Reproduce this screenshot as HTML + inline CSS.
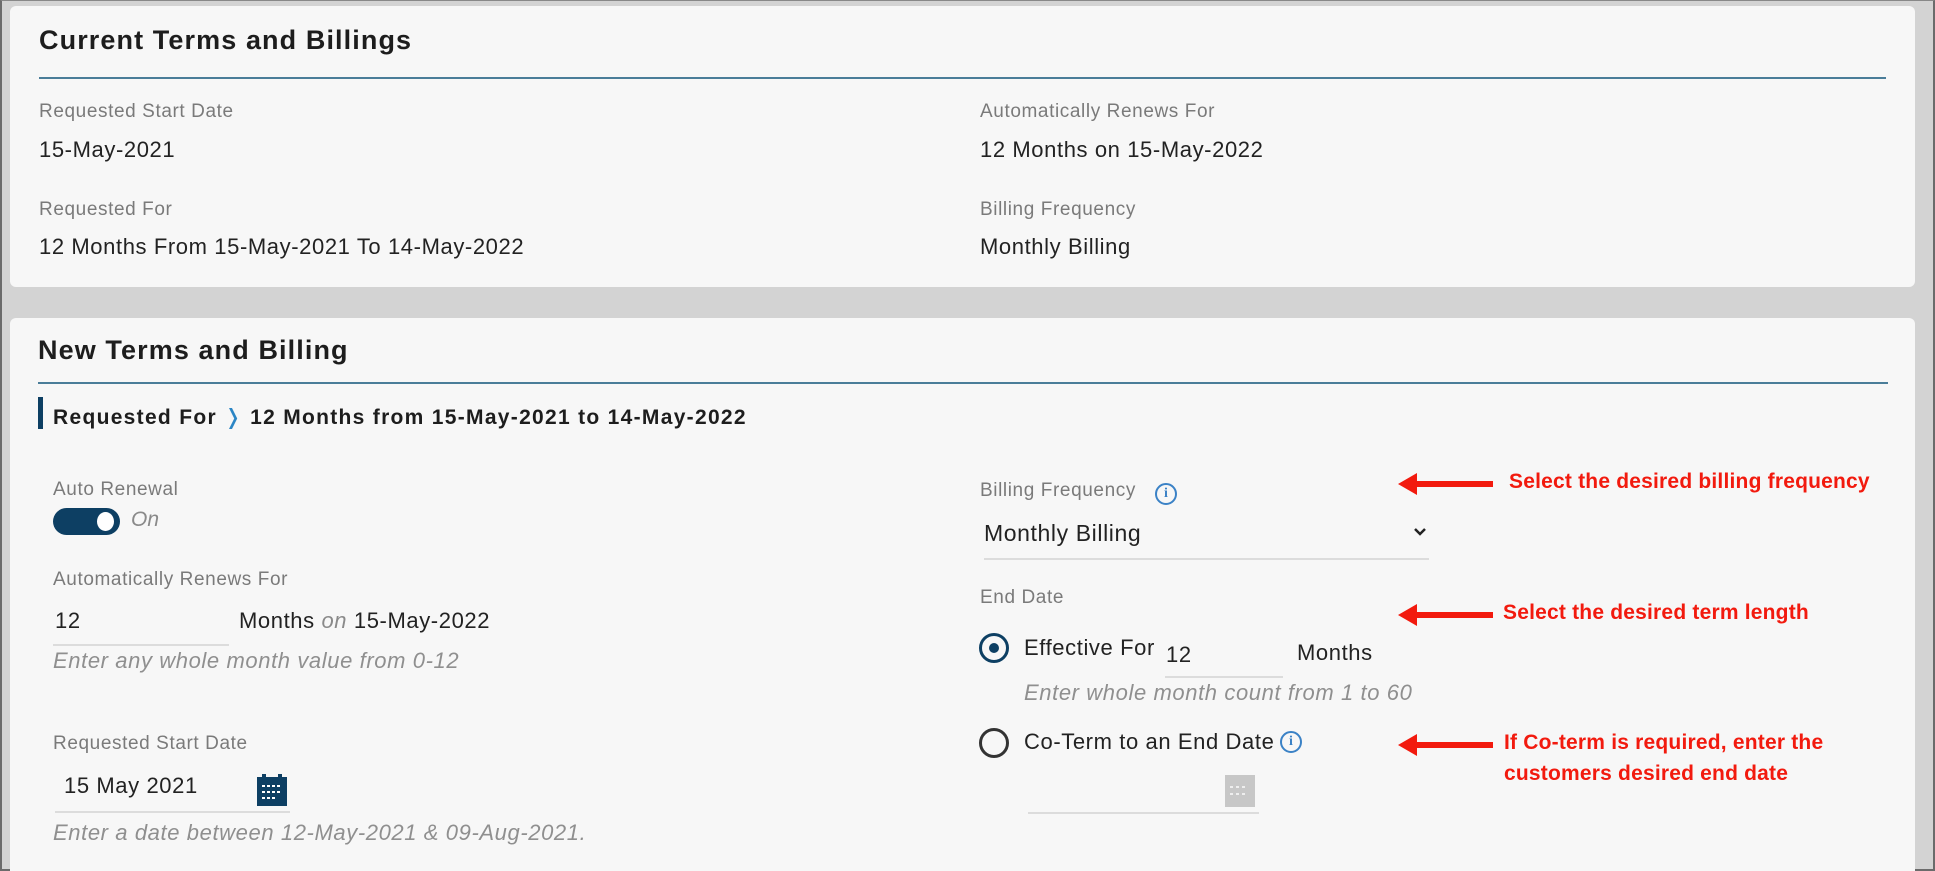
<!DOCTYPE html>
<html><head><meta charset="utf-8"><style>
*{margin:0;padding:0;box-sizing:border-box}
html,body{width:1935px;height:871px;overflow:hidden}
body{background:#d3d3d3;font-family:"Liberation Sans",sans-serif;position:relative;color:#222}
.frame{position:absolute;left:0;top:0;width:1935px;height:871px;border:2px solid #6b6b6b;border-top:1px solid #888}
.card{position:absolute;background:#f7f7f7;border-radius:6px}
.a{position:absolute;white-space:nowrap}
.t{font-size:27px;font-weight:bold;color:#1d1d1d;letter-spacing:1.1px}
.l{font-size:19px;color:#7a7a7a;letter-spacing:0.6px}
.v{font-size:22px;color:#222;letter-spacing:0.6px}
.h{font-size:22px;color:#8f8f8f;font-style:italic;letter-spacing:0.6px}
.rule{position:absolute;height:2px;background:#4a7d99}
.ul{position:absolute;height:2px;background:#dcdcdc}
.red{font-family:"Liberation Sans",sans-serif;font-weight:bold;font-size:21px;color:#f21a0e;letter-spacing:0.2px}
.arrow{position:absolute;width:95px;height:22px}
.info{position:absolute;width:22px;height:22px;border:2px solid #3b82c6;border-radius:50%;color:#3b82c6;font-size:14px;font-weight:bold;text-align:center;line-height:18px;font-family:"Liberation Serif",serif}
</style></head><body>
<div class="frame"></div>

<div class="card" style="left:10px;top:6px;width:1905px;height:281px"></div>
<div class="a t" style="left:39px;top:25px">Current Terms and Billings</div>
<div class="rule" style="left:39px;top:77px;width:1847px"></div>
<div class="a l" style="left:39px;top:101px">Requested Start Date</div>
<div class="a v" style="left:39px;top:137px">15-May-2021</div>
<div class="a l" style="left:39px;top:199px">Requested For</div>
<div class="a v" style="left:39px;top:234px">12 Months From 15-May-2021 To 14-May-2022</div>
<div class="a l" style="left:980px;top:101px">Automatically Renews For</div>
<div class="a v" style="left:980px;top:137px">12 Months on 15-May-2022</div>
<div class="a l" style="left:980px;top:199px">Billing Frequency</div>
<div class="a v" style="left:980px;top:234px">Monthly Billing</div>

<div class="card" style="left:10px;top:318px;width:1905px;height:560px"></div>
<div class="a t" style="left:38px;top:335px">New Terms and Billing</div>
<div class="rule" style="left:38px;top:382px;width:1850px"></div>
<div style="position:absolute;left:38px;top:397px;width:5px;height:32px;background:#0d3f63"></div>
<div class="a" style="left:53px;top:405px;font-size:21px;font-weight:bold;color:#1d1d1d;letter-spacing:1.3px">Requested For <span style="color:#2c86c5;font-weight:normal">&#x276D;</span> 12 Months from 15-May-2021 to 14-May-2022</div>

<div class="a l" style="left:53px;top:479px">Auto Renewal</div>
<div style="position:absolute;left:53px;top:508px;width:67px;height:27px;border-radius:14px;background:#0d3f63"></div>
<div style="position:absolute;left:97px;top:512px;width:17px;height:19px;border-radius:50%;background:#fff"></div>
<div class="a" style="left:131px;top:508px;font-size:21px;font-style:italic;color:#8a8a8a">On</div>

<div class="a l" style="left:53px;top:569px">Automatically Renews For</div>
<div class="a v" style="left:55px;top:608px">12</div>
<div class="ul" style="left:53px;top:644px;width:176px"></div>
<div class="a v" style="left:239px;top:608px">Months <i style="color:#8a8a8a">on</i> 15-May-2022</div>
<div class="a h" style="left:53px;top:648px">Enter any whole month value from 0-12</div>

<div class="a l" style="left:53px;top:733px">Requested Start Date</div>
<div class="a v" style="left:64px;top:773px">15 May 2021</div>
<svg style="position:absolute;left:257px;top:774px" width="30" height="32" viewBox="0 0 30 32"><rect x="0" y="3" width="30" height="29" fill="#0d3f63"/><rect x="5" y="0" width="4" height="5" fill="#0d3f63"/><rect x="21" y="0" width="4" height="5" fill="#0d3f63"/><g fill="#fff"><rect x="5" y="11" width="3" height="2"/><rect x="10" y="11" width="3" height="2"/><rect x="15" y="11" width="3" height="2"/><rect x="20" y="11" width="3" height="2"/><rect x="5" y="17" width="3" height="2"/><rect x="10" y="17" width="3" height="2"/><rect x="15" y="17" width="3" height="2"/><rect x="20" y="17" width="3" height="2"/><rect x="5" y="23" width="3" height="2"/><rect x="10" y="23" width="3" height="2"/><rect x="15" y="23" width="3" height="2"/></g></svg>
<div class="ul" style="left:55px;top:811px;width:235px"></div>
<div class="a h" style="left:53px;top:820px">Enter a date between 12-May-2021 &amp; 09-Aug-2021.</div>

<div class="a l" style="left:980px;top:480px">Billing Frequency</div>
<div class="info" style="left:1155px;top:483px">i</div>
<div class="a" style="left:984px;top:520px;font-size:23px;color:#222;letter-spacing:0.6px">Monthly Billing</div>
<svg style="position:absolute;left:1412px;top:526px" width="16" height="12" viewBox="0 0 16 12"><path d="M3 3l5 5 5-5" fill="none" stroke="#222" stroke-width="2.5"/></svg>
<div class="ul" style="left:984px;top:558px;width:445px"></div>

<div class="a l" style="left:980px;top:587px">End Date</div>
<div style="position:absolute;left:979px;top:633px;width:30px;height:30px;border:3px solid #0d3f63;border-radius:50%"></div>
<div style="position:absolute;left:989px;top:643px;width:10px;height:10px;background:#0d3f63;border-radius:50%"></div>
<div class="a v" style="left:1024px;top:635px">Effective For</div>
<div class="a v" style="left:1166px;top:642px">12</div>
<div class="a v" style="left:1297px;top:640px">Months</div>
<div class="ul" style="left:1165px;top:676px;width:118px"></div>
<div class="a h" style="left:1024px;top:680px">Enter whole month count from 1 to 60</div>

<div style="position:absolute;left:979px;top:728px;width:30px;height:30px;border:3px solid #333;border-radius:50%"></div>
<div class="a v" style="left:1024px;top:729px">Co-Term to an End Date</div>
<div class="info" style="left:1280px;top:731px">i</div>
<svg style="position:absolute;left:1225px;top:775px" width="30" height="32" viewBox="0 0 30 32"><rect x="0" y="0" width="30" height="32" fill="#c7c7c7"/><g fill="#eee"><rect x="5" y="11" width="3" height="2"/><rect x="11" y="11" width="3" height="2"/><rect x="17" y="11" width="3" height="2"/><rect x="5" y="18" width="3" height="2"/><rect x="11" y="18" width="3" height="2"/><rect x="17" y="18" width="3" height="2"/></g></svg>
<div class="ul" style="left:1028px;top:812px;width:231px"></div>

<svg class="arrow" style="left:1398px;top:473px" viewBox="0 0 95 22"><path d="M0 11L19 0V8H95V14H19V22Z" fill="#f21a0e"/></svg>
<div class="a red" style="left:1509px;top:470px">Select the desired billing frequency</div>
<svg class="arrow" style="left:1398px;top:604px" viewBox="0 0 95 22"><path d="M0 11L19 0V8H95V14H19V22Z" fill="#f21a0e"/></svg>
<div class="a red" style="left:1503px;top:601px">Select the desired term length</div>
<svg class="arrow" style="left:1398px;top:734px" viewBox="0 0 95 22"><path d="M0 11L19 0V8H95V14H19V22Z" fill="#f21a0e"/></svg>
<div class="a red" style="left:1504px;top:731px">If Co-term is required, enter the</div>
<div class="a red" style="left:1504px;top:762px">customers desired end date</div>
</body></html>
